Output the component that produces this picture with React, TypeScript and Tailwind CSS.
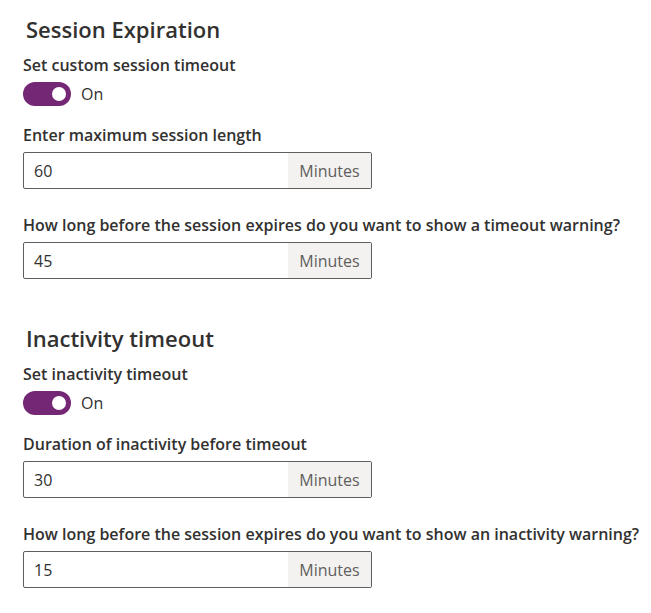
import React, { useState } from "react";

const font = { fontFamily: '"Open Sans", "Noto Sans", sans-serif' };

function Toggle({ label }: { label: string }) {
  const [on, setOn] = useState(true);
  return (
    <div className="mt-[3px] flex h-[30px] items-center gap-[10px]">
      <button
        onClick={() => setOn(!on)}
        className={`flex h-[24px] w-[48px] items-center rounded-full px-[5px] ${
          on ? "justify-end bg-[#742774]" : "justify-start border border-[#605e5c] bg-white"
        }`}
      >
        <span className={`h-[14px] w-[14px] rounded-full ${on ? "bg-white" : "bg-[#605e5c]"}`} />
      </button>
      <span className="text-[16px] text-[#323130]">{on ? label : "Off"}</span>
    </div>
  );
}

function MinutesInput({ value }: { value: string }) {
  const [v, setV] = useState(value);
  return (
    <div className="flex h-[37px] w-[349px] overflow-hidden rounded-[2px] border border-[#605e5c] bg-white">
      <input
        value={v}
        onChange={(e) => setV(e.target.value)}
        className="min-w-0 flex-1 bg-transparent px-[10px] text-[16px] text-[#323130] outline-none"
        style={font}
      />
      <div className="flex w-[83px] items-center justify-center bg-[#f3f2f1] text-[16px] text-[#605e5c]">
        Minutes
      </div>
    </div>
  );
}

function Label({ children }: { children: React.ReactNode }) {
  return (
    <div className="whitespace-nowrap text-[16px] font-semibold leading-[22px] text-[#323130]">{children}</div>
  );
}

export default function App() {
  return (
    <div className="min-h-screen bg-white px-[23px] pt-[15px]" style={font}>
      <h2 className="pl-[3px] text-[22px] font-semibold leading-[28px] text-[#323130]">Session Expiration</h2>
      <div className="mt-[11px]">
        <Label>Set custom session timeout</Label>
        <Toggle label="On" />
      </div>
      <div className="mt-[15px] flex flex-col gap-[6px]">
        <Label>Enter maximum session length</Label>
        <MinutesInput value="60" />
      </div>
      <div className="mt-[25px] flex flex-col gap-[6px]">
        <Label>How long before the session expires do you want to show a timeout warning?</Label>
        <MinutesInput value="45" />
      </div>

      <h2 className="mt-[45px] pl-[3px] text-[22px] font-semibold leading-[28px] text-[#323130]">Inactivity timeout</h2>
      <div className="mt-[11px]">
        <Label>Set inactivity timeout</Label>
        <Toggle label="On" />
      </div>
      <div className="mt-[15px] flex flex-col gap-[6px]">
        <Label>Duration of inactivity before timeout</Label>
        <MinutesInput value="30" />
      </div>
      <div className="mt-[25px] flex flex-col gap-[6px]">
        <Label>How long before the session expires do you want to show an inactivity warning?</Label>
        <MinutesInput value="15" />
      </div>
    </div>
  );
}
